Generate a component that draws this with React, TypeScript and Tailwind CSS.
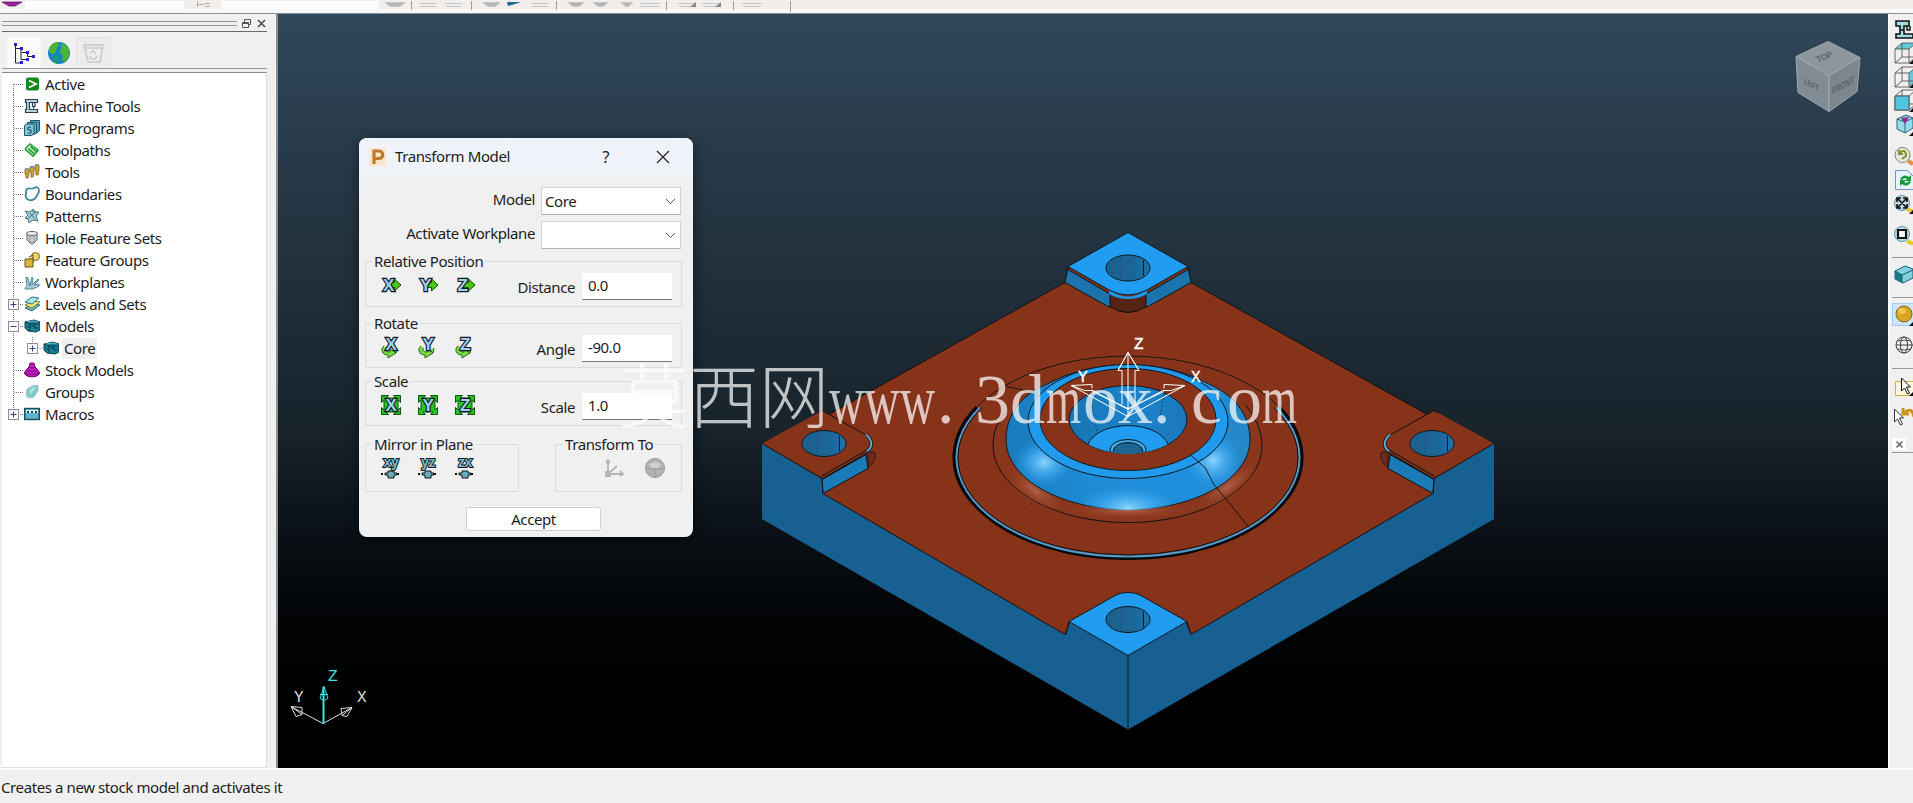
import React from 'react';

interface TreeNode {
    label: string;
    icon: React.ReactNode;
    box?: '+' | '-';
    child?: boolean;
}

const Svg: React.FC<{ children: React.ReactNode }> = ({ children }) => (
    <svg width="16" height="16" viewBox="0 0 16 16" fill="none" className="shrink-0">
        {children}
    </svg>
);

const ModelIcon = () => (
    <Svg>
        <path d="M1 4 10 2l6 2v8l-4 2-8-1-3-3z" fill="#1a7d92" stroke="#0c4353" />
        <path d="M1 4l5 2h9M6 6v7M8 8h3v2h3M3 8l2 2" stroke="#08394a" />
        <path d="M3 4l7-1 4 1" stroke="#5fc0cf" />
    </Svg>
);

const nodes: TreeNode[] = [
    { label: 'Active', icon: (
        <Svg>
            <rect x="2" y="1.5" width="13" height="13" rx="2" fill="#12881d" />
            <path d="M5 4.500 12 8l-7 3.500" stroke="#fff" strokeWidth="1.800" />
        </Svg>
    ) },
    { label: 'Machine Tools', icon: (
        <Svg>
            <path d="M1.500 1.500h12v3h-8v7h8v3h-12v-3h1v-7h-1z" fill="#b5d3dc" stroke="#26404b" strokeWidth="1.200" />
            <path d="M8.500 4.500v4h2.500v-4M9.700 8v2.500" stroke="#26404b" strokeWidth="1.200" />
        </Svg>
    ) },
    { label: 'NC Programs', icon: (
        <Svg>
            <path d="M6.500 0.500h9v10l-3 3h-6z" fill="#4c9db8" stroke="#1d586e" />
            <path d="M3.500 2.500h9v10l-2 2h-7z" fill="#63b0c8" stroke="#1d586e" />
            <path d="M0.500 5.500l2-1.500h7.500v9l-2 2.500H0.500z" fill="#86c4d6" stroke="#1d586e" />
            <path d="M7 7 4 7.500v2l3 1v2l-3 1" stroke="#1d586e" strokeWidth="1.200" />
        </Svg>
    ) },
    { label: 'Toolpaths', icon: (
        <Svg>
            <path d="M1 7 6 2l8 6M1 7l8 7 5.500-6M4 6.500l6 5M6.500 4.500l6 5" stroke="#1e9f35" strokeWidth="1.700" />
            <path d="M2.800 7.800l6 5M5.300 5.500l6 5M7.500 3.500l5.500 4.500" stroke="#8be88e" strokeWidth="0.700" />
        </Svg>
    ) },
    { label: 'Tools', icon: (
        <Svg>
            <path d="M1 5h4v5l-1 4H2V10H1zM6 3h4v5l-1 5H7V8H6zM11 1h4v5l-1 5h-2V6h-1z" fill="#cfa83a" stroke="#7a5b12" strokeWidth="0.800" />
            <path d="M1 5h4M6 3h4M11 1h4" stroke="#8893a0" strokeWidth="2" />
        </Svg>
    ) },
    { label: 'Boundaries', icon: (
        <Svg>
            <path d="M3 3c3-2 4 1 7-1s5 0 5 3-2 4-3 6-4 4-7 3-4-4-3-6-1-3 1-5z" stroke="#3b87a0" strokeWidth="1.800" />
        </Svg>
    ) },
    { label: 'Patterns', icon: (
        <Svg>
            <path d="M1 3l5 1 3-3 2 3h4l-3 4 2 5-5-1-4 3-1-4-3-1 3-3z" fill="#a9cbd5" stroke="#437787" />
            <path d="M3 11 12 4M6 5l5 6M8 3l4 1" stroke="#437787" />
        </Svg>
    ) },
    { label: 'Hole Feature Sets', icon: (
        <Svg>
            <path d="M3 3v7l3 3h4l3-3V3" fill="#c9d0d4" stroke="#5b666c" />
            <ellipse cx="8" cy="3.500" rx="5.500" ry="2" fill="#f2f5f6" stroke="#5b666c" />
            <path d="M6 5v8M10 5v8M8 13v2" stroke="#7c878d" strokeWidth="0.800" />
        </Svg>
    ) },
    { label: 'Feature Groups', icon: (
        <Svg>
            <circle cx="11.500" cy="4.500" r="4" fill="#edd36a" stroke="#8a6b11" />
            <path d="M5 5 9 3v8" fill="#d7d0ae" stroke="#5b4a16" />
            <path d="M1 7h8v8H1z" fill="#dcb63f" stroke="#6b5210" />
        </Svg>
    ) },
    { label: 'Workplanes', icon: (
        <Svg>
            <path d="M3 12 2 3l2 1 2 8 2-9 1 1-1 7 6-6 1 1-5 5 5-1v2l-6 3H1v-1z" fill="#a3cad6" stroke="#54889a" />
        </Svg>
    ) },
    { label: 'Levels and Sets', box: '+', icon: (
        <Svg>
            <path d="M1 12 9 8l7 1-8 6z" fill="#6fb4c9" stroke="#1f5d70" strokeWidth="0.900" />
            <path d="M1 9l8-4 7 1-8 6z" fill="#e9e77b" stroke="#5c7b28" strokeWidth="0.900" />
            <path d="M1 6l7-5 7 1-7 6z" fill="#a8e4ec" stroke="#1f6b75" strokeWidth="0.900" />
        </Svg>
    ) },
    { label: 'Models', box: '-', icon: <ModelIcon /> },
    { label: 'Core', box: '+', child: true, icon: <ModelIcon /> },
    { label: 'Stock Models', icon: (
        <Svg>
            <path d="M6 1h4l1 4 2 2 3 4-3 3-5 1-5-1-3-3 3-4 2-2z" fill="#c21fc0" stroke="#6d0a70" />
            <path d="M5 5c2 1 4 1 6 0M3 8c3 2 7 2 10 0M1 11c4 2 10 2 14 0" stroke="#6d0a70" />
        </Svg>
    ) },
    { label: 'Groups', icon: (
        <Svg>
            <path d="M3 5l5-3 6-1v6l-4 6-6 1-2-3z" fill="#7fcbc6" stroke="#a5c9cc" />
            <path d="M5 7l4-4 3 1-5 6z" fill="#a8e4df" />
        </Svg>
    ) },
    { label: 'Macros', box: '+', icon: (
        <Svg>
            <rect x="0.700" y="2.500" width="14.600" height="11" fill="#5fb3cb" stroke="#1d4c5e" strokeWidth="1.400" />
            <path d="M2 5.500h12" stroke="#d7f0f5" strokeWidth="3" />
            <path d="M3 6h2M7 6h2M11 6h2" stroke="#1d4c5e" strokeWidth="2" />
        </Svg>
    ) },
];

const TreeRow: React.FC<{ node: TreeNode; first: boolean; last: boolean }> = ({ node, first, last }) => (
    <div className="flex h-[22px] items-center">
        <svg width={node.child ? 41 : 22} height="22" className="shrink-0" fill="none">
            <path d={`M11.500 ${first ? 11 : 0}V${last ? 11 : 22}`} stroke="#777" strokeDasharray="1 1" />
            {node.child
                ? <path d="M30.500 0v11h10" stroke="#777" strokeDasharray="1 1" />
                : <path d="M12 11.500h10" stroke="#777" strokeDasharray="1 1" />}
            {node.box && (
                <g transform={node.child ? 'translate(19 0)' : undefined}>
                    <rect x="6.500" y="6.500" width="10" height="10" fill="#fafafa" stroke="#8d8d95" />
                    <path d={node.box === '+' ? 'M8.500 11.500h6M11.500 8.500v6' : 'M8.500 11.500h6'} stroke="#34437c" />
                </g>
            )}
        </svg>
        {node.icon}
        <span className={`ml-[3px] h-[21px] px-[2px] leading-[20px] ${node.child ? 'bg-[#efefef]' : ''}`}>{node.label}</span>
    </div>
);

const Explorer = () => (
    <div className="flex w-[278px] shrink-0 flex-col border-r-2 border-[#8a8f93] bg-[#f0f0f0] pl-[2px]">
        <div className="flex h-[18px] w-[265px] items-center border-b border-[#6b6b6b] pt-[2px]">
            <div className="mr-1 h-[5px] flex-1 border-y border-[#969696]" />
            <svg width="26" height="12" fill="none" stroke="#555">
                <path d="M3.500 4.500v-3h6v5h-2M1.500 4.500h6v5h-6zM1 5.500h6" />
                <path d="M17 2l7 7M24 2l-7 7" strokeWidth="1.700" />
            </svg>
        </div>
        <div className="mt-[5px] flex h-[32px] w-[265px] border-b border-[#999] pl-[5px]">
            <div className="flex w-[34px] items-center justify-center bg-[#fafafa]">
                <svg width="24" height="24" fill="none">
                    <path d="M3.500 3v19h6M4 7.500h5v11h6M9.500 11.500h6v4h6" stroke="#222" />
                    <path d="M2 2h3v3H2zM8 6h3v3H8zM8 20h3v3H8zM14 10h3v3h-3zM14 17h3v3h-3zM20 14h3v3h-3z" fill="#2424c8" />
                </svg>
            </div>
            <div className="flex w-[35px] items-center justify-center">
                <svg width="24" height="24">
                    <circle cx="12" cy="12" r="11" fill="#1583c4" />
                    <path d="M2 7c3-5 7-6 9-6l1 3-2 3-2 5-3 1-3-2zM14 3l4 0 4 5 0 7-4 6-3-2 1-4-3-3 1-5z" fill="#4cb535" />
                    <path d="M7 14l5 2-2 7-3-2z" fill="#1b9b6a" />
                </svg>
            </div>
            <div className="flex w-[35px] items-center justify-center border border-b-0 border-[#e2e2e2] bg-[#ececec]">
                <svg width="24" height="24" fill="none" stroke="#c9c9c9" strokeWidth="1.500">
                    <path d="M2 4h19l-3 17H6zM3 7h17M8 12l3-2 3 3M15 15l-2 3H9l-1-3" />
                </svg>
            </div>
        </div>
        <div className="mt-[3px] w-[265px] flex-1 border border-l-0 border-t-[#8b8b8b] border-r-[#ddd] border-b-[#ddd] bg-white">
            {nodes.map((n, i) => (
                <TreeRow key={n.label} node={n} first={i === 0} last={i === nodes.length - 1} />
            ))}
        </div>
    </div>
);

// toolbar buttons of which only the lower rim shows: [x, width, round]
const stubs: [number, number, boolean][] = [
    [385, 20, true], [419, 18, false], [445, 17, false], [483, 17, true], [531, 18, false], [568, 16, true],
    [593, 15, true], [621, 12, true], [640, 20, false], [678, 18, false], [702, 18, false], [742, 20, false],
];

const TopBar = () => (
    <svg width="1913" height="13" className="block shrink-0 bg-[#f1eeec]">
        <rect y="9" width="1913" height="4" fill="#f7f8f9" />
        <path d="M2 2h20L15 6H9z" fill="#9c1f9c" stroke="#5d0a60" strokeWidth="0.700" />
        <path d="M25 1h159v8H25zM221 1h158v8H221z" fill="#fdfdfd" />
        <path d="M197.500 1v6M198 4.500h6M205 3.500h5M205 6.500h5" stroke="#aaa" />
        {stubs.map(([x, w, round]) => (
            <path key={x} d={round ? `M${x} 2.500h${w}l-5 4h-${w - 10}z` : `M${x} 3.500h${w}M${x + 1} 6.500h${w - 2}`} fill="#b5b5b5" stroke="#c6c6c6" />
        ))}
        <path d="M690 7l6-5v5zM715 7l6-5v5z" fill="#888" />
        <path d="M507 2h14l-9 3-4 1z" fill="#1e6c90" />
        <path d="M411.500 1v9M471.500 1v9M556.500 1v9M666.500 1v9M733.500 1v9M790.500 1v11" stroke="#999" />
    </svg>
);

const Pad: React.FC = () => (
    <>
        <path d="M762 444 822 411 865 434Q878 443 868 452L868 454 875 463 875 468 823 494 762 480z" fill="#86331a" />
        <path d="M868 452l7 1q2 8-7 15z" fill="#6a2b18" stroke="#111" strokeWidth="0.700" />
        <path d="M762 444v76l62-25-1-15z" fill="#166191" />
        <path d="M822 480l44-25 2 14-45 25z" fill="#1b7bb8" stroke="#111" />
        <path d="M822 478l45-26q9-8-1-17" fill="none" stroke="#111" strokeWidth="3.500" />
        <path d="M867 452q9-8-1-17" fill="none" stroke="#5ca9d8" strokeWidth="2" />
        <path d="M822 478l45-26" fill="none" stroke="#7c341c" strokeWidth="1.600" />
        <path d="M818 413l4-2 43 24M762 444l60 35 1 15" fill="none" stroke="#111" />
    </>
);

const Hole: React.FC<{ x: number; y: number }> = ({ x, y }) => (
    <g stroke="#101820">
        <ellipse cx={x} cy={y} rx="22" ry="13" fill="url(#hole)" />
        <path d={`M${x + 15.5} ${y - 8}v16`} />
        <path d={`M${x - 16} ${y - 8}v16M${x - 7} ${y - 12}v24M${x + 6} ${y - 12}v24`} strokeWidth="0.400" strokeDasharray="1 3" />
    </g>
);

const ModelScene = () => (
    <svg width="1610" height="754" viewBox="278 14.500 1610 754" className="block">
        <defs>
            <linearGradient id="hole"><stop offset="0" stopColor="#1d608c" /><stop offset="0.600" stopColor="#1b6699" /><stop offset="1" stopColor="#1c74ad" /></linearGradient>
            <linearGradient id="dome"><stop offset="0" stopColor="#1a7bbb" /><stop offset="0.350" stopColor="#1e8bd6" /><stop offset="0.750" stopColor="#1f8fdc" /><stop offset="1" stopColor="#2587c4" /></linearGradient>
            <linearGradient id="bowl"><stop offset="0" stopColor="#1874b2" /><stop offset="0.600" stopColor="#1c84cb" /><stop offset="1" stopColor="#1978b8" /></linearGradient>
            <radialGradient id="glow"><stop offset="0" stopColor="#8bd4ff" /><stop offset="0.500" stopColor="#4db4f7" stopOpacity="0.600" /><stop offset="1" stopColor="#2aa0f0" stopOpacity="0" /></radialGradient>
            <radialGradient id="warm"><stop offset="0" stopColor="#b86e55" stopOpacity="0.800" /><stop offset="1" stopColor="#9a4428" stopOpacity="0" /></radialGradient>
            <clipPath id="domeClip"><ellipse cx="1128" cy="439" rx="122.500" ry="71.500" /></clipPath>
            <clipPath id="bowlClip"><ellipse cx="1128" cy="420" rx="59" ry="34" /></clipPath>
        </defs>

        {/* block */}
        <path d="M762 444V519.500L1128 730 1494 519.500V444L1128 470z" fill="#166191" />
        <path d="M1065 283 818 421 823 494 1065 635 1070 622 1118 595H1138L1186 622 1191 635 1433 494 1438 421 1191 283 1128 260z" fill="#86331a" stroke="#111" />
        <Pad />
        <g transform="matrix(-1 0 0 1 2256 0)"><Pad /></g>

        {/* rear corner */}
        <path d="M1068 267 1065 283 1108 307 1128 312 1148 307 1191 283 1188 267z" fill="#1b74ad" stroke="#111" />
        <path d="M1110 294v13q18 12 36 0v-13z" fill="#572313" stroke="#111" />
        <path d="M1068 267v3l43 25q17 8 34 0l43-25v-3z" fill="#7c341c" stroke="#111" />
        <path d="M1110 292q18 12 36 0v2q-18 9-36 0z" fill="#2196e8" stroke="#2196e8" strokeWidth="2" />
        <path d="M1128 233 1068 267 1110 291q18 9 36 0L1188 267z" fill="#209cf0" stroke="#101820" />

        {/* front corner */}
        <path d="M1128 656 1069 622 1117 595q11-4 22 0L1187 622z" fill="#209cf0" stroke="#101820" />
        <path d="M1128 656v74M1069 622l-3 13M1187 622l4 13" stroke="#101820" fill="none" />

        <Hole x={1128} y={268.5} />
        <Hole x={824} y={444} />
        <Hole x={1432} y={444} />
        <Hole x={1128} y={620} />

        {/* groove */}
        <ellipse cx="1128" cy="457.500" rx="174" ry="101" fill="none" stroke="#1b1512" />
        <path d="M977 408A173.500 101 0 1 0 1279 408" fill="none" stroke="#05090d" strokeWidth="4" />
        <path d="M980 408A171.500 99 0 1 0 1276 408" fill="none" stroke="#4d9cce" strokeWidth="2" />
        <path d="M982 408A170 97.500 0 1 0 1274 408" fill="none" stroke="#111" />

        {/* fillet and boss */}
        <path d="M1008 410Q993 425 993 446C993 488 1053 523 1128 523S1262 488 1262 446Q1262 425 1245 405" fill="#89361c" stroke="#111" />
        <ellipse cx="1035" cy="491" rx="34" ry="13" fill="url(#warm)" transform="rotate(35 1035 491)" />
        <ellipse cx="1228" cy="487" rx="36" ry="11" fill="url(#warm)" transform="rotate(-35 1228 487)" />
        <ellipse cx="1128" cy="511" rx="60" ry="8" fill="url(#warm)" />
        <path d="M1006 440C1006 415 1022 395 1046 385Q1082 365 1128 365T1210 385C1234 396 1250 415 1250 440C1250 479 1196 510 1128 510S1006 479 1006 440z" fill="url(#dome)" stroke="#101820" />
        <g clipPath="url(#domeClip)">
            <ellipse cx="1044" cy="463" rx="30" ry="24" fill="url(#glow)" />
            <ellipse cx="1128" cy="508" rx="52" ry="22" fill="url(#glow)" />
            <ellipse cx="1213" cy="461" rx="28" ry="28" fill="url(#glow)" />
        </g>
        <ellipse cx="1128" cy="422" rx="100" ry="57" fill="#209aed" stroke="#101820" />
        <ellipse cx="1128" cy="420" rx="88" ry="51" fill="#86331a" stroke="#101820" />
        <ellipse cx="1128" cy="420" rx="59" ry="34" fill="url(#bowl)" stroke="#101820" />
        <g clipPath="url(#bowlClip)">
            <path d="M1090 394l3 24 5 15M1164 394l-5 30" stroke="#101820" strokeWidth="0.600" fill="none" strokeDasharray="2 2" />
            <ellipse cx="1128" cy="450" rx="41" ry="24" fill="#209cf0" stroke="#101820" />
            <ellipse cx="1128" cy="450" rx="18" ry="10" fill="#3fabe9" stroke="#101820" />
            <ellipse cx="1128" cy="452" rx="15" ry="9" fill="#1c6592" stroke="#101820" />
        </g>
        <path d="M1191 456l14 12 9 17 35 43M1006 387l30 6" stroke="#111" strokeWidth="0.900" fill="none" />
        <path d="M1032 503l-25 20" stroke="#111" strokeWidth="0.700" strokeDasharray="1 3" />

        {/* workplane arrows */}
        <g stroke="#fff" fill="none">
            <path d="M1128 417V353l-10 18h4v34M1128 353l11 18h-4v34M1118 371l10-18 11 18" />
            <path d="M1128 409l-36-17M1128 417l-57-31 21-1v4M1071 386l14 5h8l35 19M1128 409l36-17M1128 417l57-31-21-1v4M1185 386l-14 5h-8l-35 19" />
        </g>
        <g fill="#fff" stroke="#fff" strokeWidth="0.400" fontFamily="Liberation Mono, monospace" fontSize="16">
            <text x="1134" y="349">Z</text>
            <text x="1078" y="382">Y</text>
            <text x="1191" y="382">X</text>
        </g>

        {/* view axes */}
        <g fill="none" stroke="#ddd">
            <path d="M323 724l-32-17 11 1 0 7-11-8 5 10 6-2M323 724l29-16-11 1 1 7 10-8-5 9-5-1" />
            <path d="M323.500 724v-37" stroke="#3be3e3" strokeWidth="2" />
            <path d="M324 687l-4 12 4 2 4-2zM320 695h8" stroke="#3be3e3" />
        </g>
        <g fill="#ddd" fontFamily="Liberation Mono, monospace" fontSize="16">
            <text x="328" y="681" fill="#3be3e3">Z</text>
            <text x="294" y="702">Y</text>
            <text x="357" y="702">X</text>
        </g>

        {/* view cube */}
        <g stroke="#a0aab1" strokeWidth="1">
            <path d="M1828 42l32 16-31 18-33-19z" fill="#8d969d" />
            <path d="M1796 57l33 19v36l-31-19z" fill="#808b93" />
            <path d="M1860 58l-31 18v36l28-20z" fill="#7b868f" />
        </g>
        <g fill="#5b656e" fontFamily="Liberation Sans, sans-serif" fontSize="9" fontWeight="bold">
            <text transform="matrix(.9 -.35 .5 .85 1818 63)">TOP</text>
            <text transform="matrix(.8 .4 0 1 1804 84)" fontSize="8">LEFT</text>
            <text transform="matrix(.8 -.42 0 1.2 1832 95)" fontSize="8.500">FRONT</text>
        </g>
    </svg>
);

type IconKind = 'move' | 'rotate' | 'scale' | 'mirror';

const AxisIcon: React.FC<{ kind: IconKind; axis: string }> = ({ kind, axis }) => (
    <svg width="22" height="22" className="shrink-0 overflow-visible" fill="none">
        {kind === 'move' && <path d="M9 8.500h5.500V5l6.500 6-6.500 6v-3.500H9z" fill="#4fc414" stroke="#125008" />}
        {kind === 'rotate' && <path d="M4 10c-4 3-2 9 4 9v3l8-5-6-4v3c-4 0-5-2-3-4M13 14l3 3 1-5" fill="#7bd944" stroke="#1d6b16" />}
        {kind === 'scale' && (
            <path d="M1.500 1.500h7L6 4h10l-2.500-2.500h7v7L18 6v10l2.500-2.500v7h-7L16 18H6l2.500 2.500h-7v-7L4 16V6L1.500 8.500z" fill="#25c51b" stroke="#0c5210" />
        )}
        {kind === 'mirror' && (
            <>
                <path d="M1 17h20" stroke="#111" strokeWidth="2" strokeDasharray="2 2" />
                <path d="M8 14h6v2h3v2h-3v3H8v-3H5v-2h3z" fill="#69aec0" stroke="#111" />
            </>
        )}
        <text
            x={kind === 'move' ? 8.5 : 11}
            y={kind === 'mirror' ? 9.5 : kind === 'rotate' ? 14 : 16.5}
            textAnchor="middle"
            fontFamily="Liberation Sans, sans-serif"
            fontWeight="bold"
            fontSize={kind === 'mirror' ? 14 : 17}
            fill={kind === 'mirror' ? '#7cb8c8' : '#9fd0ee'}
            stroke="#101b28"
            strokeWidth={kind === 'mirror' ? 2 : 2.4}
            paintOrder="stroke"
        >
            {axis}
        </text>
    </svg>
);

interface GroupProps {
    title: string;
    kind: IconKind;
    field: string;
    value: string;
    className: string;
}

const Group: React.FC<GroupProps> = ({ title, kind, field, value, className }) => (
    <fieldset className={`w-[317px] border border-[#dcdcdc] ${className}`}>
        <legend className="ml-[6px] h-5 px-[2px] leading-5">{title}</legend>
        <div className="flex h-[31px] items-center pr-[9px] pl-[14px]">
            <div className="flex gap-[15px] pb-[4px]">
                {['X', 'Y', 'Z'].map((a) => <AxisIcon key={a} kind={kind} axis={a} />)}
            </div>
            <span className="ml-auto pt-[2px]">{field}</span>
            <div className="ml-[7px] h-[27px] w-[90px] border-b border-[#777] bg-white pl-[6px] leading-[25px]">{value}</div>
        </div>
    </fieldset>
);

const Combo: React.FC<{ label: string; value: string }> = ({ label, value }) => (
    <div className="flex h-[28px] items-center justify-end">
        <span className="pb-[3px]">{label}</span>
        <div className="ml-[6px] flex h-[28px] w-[140px] items-center border border-[#d2d2d2] border-b-[#b5b5b5] bg-white pr-[4px] pl-[3px]">
            <span className="flex-1">{value}</span>
            <svg width="11" height="7" fill="none" stroke="#555"><path d="M1 1l4.500 4.500L10 1" /></svg>
        </div>
    </div>
);

const TransformDialog = () => (
    <div className="absolute top-[124px] left-[81px] h-[399px] w-[334px] overflow-hidden rounded-lg bg-[#f0f0f0] shadow-[0_4px_14px_rgba(0,0,0,0.5)]">
        <div className="flex h-[37px] items-center bg-[#f0f3fa] pl-[10px]">
            <svg width="17" height="18">
                <rect width="17" height="18" fill="#fbe6cf" />
                <path d="M5 16V3h5a3.500 3.500 0 0 1 0 7.500H5" fill="none" stroke="#c07a2b" strokeWidth="3.200" />
            </svg>
            <span className="ml-[9px]">Transform Model</span>
            <span className="ml-auto text-[16px]">?</span>
            <svg width="14" height="14" className="mr-[23px] ml-[47px]" stroke="#222" strokeWidth="1.200"><path d="M1 1l12 12M13 1 1 13" /></svg>
        </div>
        <div className="flex flex-col pr-[12px] pl-[6px]">
            <div className="mt-[12px] flex flex-col gap-[6px]">
                <Combo label="Model" value="Core" />
                <Combo label="Activate Workplane" value="" />
            </div>
            <Group title="Relative Position" kind="move" field="Distance" value="0.0" className="mt-[2px] h-[56px]" />
            <Group title="Rotate" kind="rotate" field="Angle" value="-90.0" className="mt-[6px] h-[55px]" />
            <Group title="Scale" kind="scale" field="Scale" value="1.0" className="mt-[3px] h-[55px]" />
            <div className="mt-[8px] flex w-[317px] justify-between">
                <fieldset className="h-[58px] w-[154px] border border-[#dcdcdc]">
                    <legend className="ml-[6px] h-5 px-[2px] leading-5">Mirror in Plane</legend>
                    <div className="flex gap-[15px] pt-[3px] pl-[14px]">
                        {['xy', 'yz', 'zx'].map((a) => <AxisIcon key={a} kind="mirror" axis={a} />)}
                    </div>
                </fieldset>
                <fieldset className="h-[58px] w-[127px] border border-[#dcdcdc]">
                    <legend className="ml-[7px] h-5 px-[2px] leading-5">Transform To</legend>
                    <div className="flex justify-end gap-[20px] pt-[4px] pr-[16px]">
                        <svg width="22" height="20" fill="none" stroke="#b4b4b4" strokeWidth="1.800">
                            <path d="M5 2v14h13M5 16l9-8M3 5l2-3 2 3M17 13l3 3-3 2M3 14h4v4H3z" />
                        </svg>
                        <svg width="20" height="20">
                            <circle cx="10" cy="10" r="9.500" fill="#b2b2b2" stroke="#989898" />
                            <path d="M4 7q6-6 12 0l-3 3H7z" fill="#d0d0d0" />
                            <path d="M2 11h16M10 11v8" stroke="#9c9c9c" />
                        </svg>
                    </div>
                </fieldset>
            </div>
            <button className="mt-[15px] ml-[101px] h-[24px] w-[135px] rounded-[3px] border border-[#d0d0d0] bg-white leading-[20px]">Accept</button>
        </div>
    </div>
);

const Watermark = () => (
    <svg width="700" height="100" viewBox="610 355 700 100" className="pointer-events-none absolute top-[341px] left-[332px] overflow-visible tracking-normal">
        <text y="423" fill="#fff" opacity="0.720" fontSize="70" fontFamily="Liberation Serif, Noto Sans CJK SC, serif">
            <tspan x="619" fontSize="70" fontWeight="300" fontFamily="Noto Sans CJK SC, sans-serif">莫西网</tspan>
            <tspan x="829" textLength="106" lengthAdjust="spacingAndGlyphs">www</tspan>
            <tspan x="937">.</tspan>
            <tspan x="975">3d</tspan>
            <tspan x="1046" textLength="35" lengthAdjust="spacingAndGlyphs">m</tspan>
            <tspan x="1083">ox</tspan>
            <tspan x="1153">.</tspan>
            <tspan x="1191">c</tspan>
            <tspan x="1227">o</tspan>
            <tspan x="1262" textLength="35" lengthAdjust="spacingAndGlyphs">m</tspan>
        </text>
    </svg>
);

const cube = 'M1 7h14v14H1zM1 7l7-6h14l-7 6M22 1v14l-7 6M8 1v14l-7 6M8 15h14';

// every view button is wider than the strip and gets cut by the window edge
const RightBar = () => (
    <svg width="25" height="754" viewBox="1888 14 25 754" className="block shrink-0 bg-[#f0f0f0]" fill="none">
        <path d="M1888.500 13v756" stroke="#fff" strokeWidth="2" />
        <path d="M1896 21h13v5h-5v8h9v4h-17v-4h4V26h-4z" fill="#a4dbe2" stroke="#111" strokeWidth="1.600" />
        <path d="M1907 26v4h3v-4M1901 30h3" stroke="#111" strokeWidth="1.500" />
        <g transform="translate(1894 42)"><path d="M1 7l7-6h14l-7 6z" fill="#62cbe0" /><path d={cube} stroke="#555" strokeWidth="0.900" /></g>
        <g transform="translate(1894 66)"><path d="M15 7l7-6v14l-7 6z" fill="#62cbe0" /><path d={cube} stroke="#555" strokeWidth="0.900" /></g>
        <g transform="translate(1894 89)"><path d={cube} stroke="#555" strokeWidth="0.900" /><path d="M1 7h14v14H1z" fill="#4fc6df" stroke="#555" /></g>
        <path d="M1897 119l9-4 7 3v10l-8 5-8-4z" fill="#96dcea" stroke="#226777" />
        <path d="M1897 119l8 3 8-4M1905 122v11" stroke="#226777" />
        <path d="M1901 118l8-1-4 7z" fill="#962690" />
        <path d="M1909 64l4-4v4zM1909 88l4-4v4zM1909 112l4-4v4zM1909 136l4-4v4z" fill="#111" />
        <circle cx="1902.500" cy="155" r="7.500" fill="#e5ebda" stroke="#7d8484" />
        <path d="M1899 153q7-5 7 3l-4 3M1899 150v4h4" stroke="#83942b" strokeWidth="2" />
        <path d="M1908 161l5 3" stroke="#e88a42" strokeWidth="4" />
        <path d="M1895.500 170.500h12l6 6v13h-18z" fill="#e7f3fd" stroke="#7392c8" />
        <path d="M1900 179q4-6 9-2l2-2v6h-6l2-2q-3-2-5 1zM1911 182q-4 6-9 2l-2 2v-6h6l-2 2q3 2 5-1z" fill="#17993a" />
        <circle cx="1902" cy="203" r="7.500" fill="#bfe0ea" stroke="#5c95a5" />
        <path d="M1898 199l8 8M1906 199l-8 8M1897 202v-4h4M1903 198h4v4M1907 204v4h-4M1901 208h-4v-4" stroke="#111" strokeWidth="1.700" />
        <path d="M1907 209l6 3" stroke="#e6c82c" strokeWidth="4" />
        <path d="M1909 214l4-4v4z" fill="#111" />
        <circle cx="1902" cy="234" r="7.500" fill="#bfe0ea" stroke="#5c95a5" />
        <path d="M1898 230h8v8h-8z" fill="#fff" stroke="#111" strokeWidth="2.200" />
        <path d="M1907 241l6 3" stroke="#e6c82c" strokeWidth="4" />
        <path d="M1892 257.500h21M1892 297.500h21M1892 368.500h21M1892 452.500h21" stroke="#999" />
        <path d="M1895 271l10-5 8 3v9l-10 5-8-4z" fill="#82d1df" stroke="#165e70" />
        <path d="M1895 271v8l7 4v-8z" fill="#16798c" />
        <path d="M1895 271l7 4 11-5M1902 275v8" stroke="#165e70" />
        <rect x="1892.500" y="303.500" width="22" height="22" fill="#cfe6f8" stroke="#9fcdf0" />
        <circle cx="1904" cy="314" r="8" fill="#d9a41f" stroke="#7d6a35" />
        <ellipse cx="1902" cy="311" rx="4" ry="3" fill="#edc94f" />
        <path d="M1909 326l4-4v4z" fill="#111" />
        <g stroke="#444">
            <circle cx="1904" cy="345" r="8" />
            <ellipse cx="1904" cy="345" rx="3.500" ry="8" />
            <path d="M1896 345h17M1898 341q6-2 13 0M1898 349q6 2 13 0" />
        </g>
        <path d="M1895.500 381.500h18v14h-18z" fill="#fff7dc" stroke="#d3ad45" />
        <path d="M1901.500 378v13l3-3 3 6 2-1-3-6h4z" fill="#fff" stroke="#111" />
        <path d="M1909 396l4-4v4z" fill="#111" />
        <path d="M1904 413q8-7 10 4M1903 408v6h6" stroke="#c9951c" strokeWidth="3" />
        <path d="M1894.500 409v13l3-3 3 6 2-1-3-6h4z" fill="#fff" stroke="#333" />
        <path d="M1892 438h14v12h-14z" fill="#fff" />
        <path d="M1896.500 441.500l6 6M1902.500 441.500l-6 6" stroke="#666" strokeWidth="1.600" />
    </svg>
);

const App: React.FC = () => (
    <div className="flex h-[803px] w-[1913px] flex-col overflow-hidden bg-[#f0f0f0] font-['Noto_Sans','Noto_Sans_CJK_SC',sans-serif] text-[15px] tracking-[-0.4px] text-[#1c1c1c]">
        <TopBar />
        <div className="flex h-[755px] border-t border-[#8a8f93]">
            <Explorer />
            <div className="relative w-[1610px] shrink-0 overflow-hidden bg-linear-to-b from-[#30475a] via-[#18232b] via-55% to-black">
                <ModelScene />
                <TransformDialog />
                <Watermark />
            </div>
            <RightBar />
        </div>
        <div className="flex flex-1 items-center border-t-2 border-white pt-px pl-[1px]">Creates a new stock model and activates it</div>
    </div>
);

export default App;
